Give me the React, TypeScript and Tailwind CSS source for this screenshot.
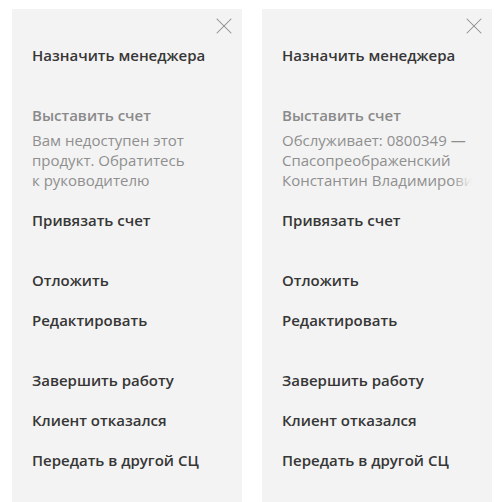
import { X } from "lucide-react";

type Action = { label: string; disabled?: boolean; note?: string[]; fade?: boolean };

const groups = (note: string[], fade: boolean): Action[][] => [
  [{ label: "Назначить менеджера" }],
  [{ label: "Выставить счет", disabled: true, note, fade }, { label: "Привязать счет" }],
  [{ label: "Отложить" }, { label: "Редактировать" }],
  [{ label: "Завершить работу" }, { label: "Клиент отказался" }, { label: "Передать в другой СЦ" }],
];

const Item = ({ a }: { a: Action }) => {
  if (a.note) {
    return (
      <div className="px-5 pt-[10px] pb-[10px]">
        <div className="h-5 leading-5 font-semibold text-[#8a8a8a]">{a.label}</div>
        <div className="mt-[5px] font-normal text-[#8f8f8f]">
          {a.note.map((line, i) => (
            <div key={i} className="relative h-5 leading-5 whitespace-nowrap overflow-hidden">
              {line}
              {a.fade && i === a.note!.length - 1 && (
                <span className="absolute right-0 top-0 h-5 w-5 bg-gradient-to-r from-transparent to-[#f3f3f3]" />
              )}
            </div>
          ))}
        </div>
      </div>
    );
  }
  return (
    <div className="h-10 px-5 flex items-center font-semibold text-[#363636] cursor-pointer">
      {a.label}
    </div>
  );
};

const Panel = ({ note, fade }: { note: string[]; fade: boolean }) => (
  <div className="relative w-[230px] bg-[#f3f3f3] pt-[26px] h-[500px]">
    <button className="absolute right-[4px] top-[3px] text-[#8c8c8c]">
      <X size={28} strokeWidth={0.9} />
    </button>
    <div className="flex flex-col gap-5">
      {groups(note, fade).map((g, i) => (
        <div key={i}>
          {g.map((a) => (
            <Item key={a.label} a={a} />
          ))}
        </div>
      ))}
    </div>
  </div>
);

export default function App() {
  return (
    <div
      className="w-[501px] h-[502px] overflow-hidden bg-white flex gap-5 pl-3 pt-[9px] text-[15px]"
      style={{ fontFamily: '"Open Sans", "Noto Sans", sans-serif' }}
    >
      <Panel note={["Вам недоступен этот", "продукт. Обратитесь", "к руководителю"]} fade={false} />
      <Panel
        note={["Обслуживает: 0800349 —", "Спасопреображенский", "Константин Владимирович"]}
        fade={true}
      />
    </div>
  );
}
